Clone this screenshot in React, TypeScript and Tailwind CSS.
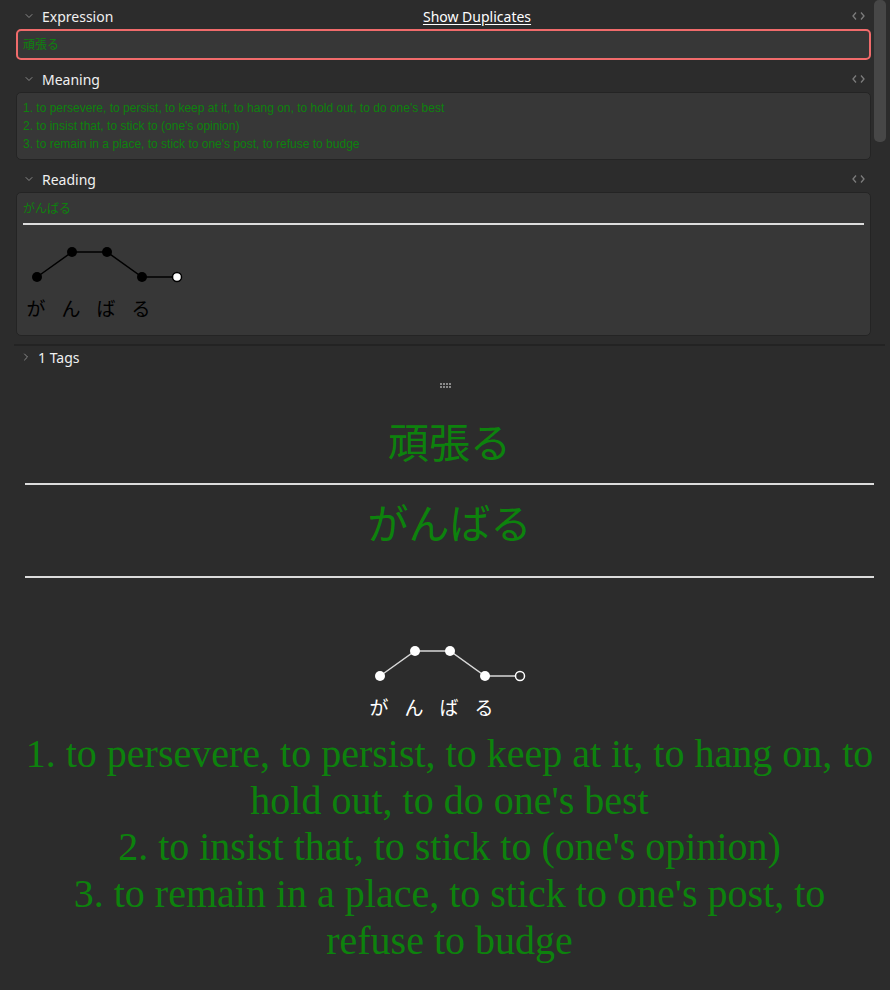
import { ChevronDown, ChevronRight } from 'lucide-react'

const MEANINGS = [
  "1. to persevere, to persist, to keep at it, to hang on, to hold out, to do one's best",
  "2. to insist that, to stick to (one's opinion)",
  "3. to remain in a place, to stick to one's post, to refuse to budge",
]

const KANA = ['が', 'ん', 'ば', 'る']

function CodeIcon() {
  return (
    <svg width="13" height="10" viewBox="0 0 13 10" fill="none" stroke="#7c7c7c" strokeWidth={1.3}>
      <path d="M4 1.5L1 5l3 3.5M9 1.5L12 5 9 8.5" />
    </svg>
  )
}

function FieldLabel({ name, extra }: { name: string; extra?: React.ReactNode }) {
  return (
    <div className="relative flex items-center h-[26px] pl-[7px] pr-[6px]">
      <ChevronDown className="w-3 h-3 text-[#8a8a8a]" strokeWidth={2} />
      <span className="ml-[7px] text-[14px] text-[#f0f0f0]">{name}</span>
      {extra}
      <div className="ml-auto">
        <CodeIcon />
      </div>
    </div>
  )
}

function Pitch({ x0, line, dot, open, textColor }: { x0: number; line: string; dot: string; open: string; textColor: string }) {
  const xs = [0, 35, 70, 105, 140].map((v) => v + x0)
  const ys = [48, 23, 23, 48, 48]
  return (
    <svg width={x0 * 2 + 140} height="100" viewBox={`0 0 ${x0 * 2 + 140} 100`}>
      <polyline points={xs.map((x, i) => `${x},${ys[i]}`).join(' ')} fill="none" stroke={line} strokeWidth={1.5} />
      {xs.slice(0, 4).map((x, i) => (
        <circle key={i} cx={x} cy={ys[i]} r={5} fill={dot} />
      ))}
      <circle cx={xs[4]} cy={ys[4]} r={4.5} fill={open} stroke={dot} strokeWidth={1.5} />
      {KANA.map((k, i) => (
        <text key={k} x={xs[i] - 1} y={87} textAnchor="middle" fontSize="19" fill={textColor} fontFamily="'Noto Sans CJK JP', sans-serif">
          {k}
        </text>
      ))}
    </svg>
  )
}

export default function App() {
  return (
    <div className="w-[890px] h-[990px] bg-[#2c2c2c] overflow-hidden relative" style={{ fontFamily: "'Noto Sans', 'Noto Sans CJK JP', sans-serif" }}>
      {/* scrollbar */}
      <div className="absolute right-[4px] top-0 w-[12px] h-[142px] rounded-[5px] bg-[#474747]" />

      {/* Editor fields */}
      <div className="mr-[5px] ml-[14px] border-b-2 border-[#232323] pb-[8px] pt-[3px]">
        <div className="ml-[2px] mr-[14px]">
          <FieldLabel
            name="Expression"
            extra={
              <span className="absolute left-[461px] -translate-x-1/2 text-[14px] text-white underline underline-offset-2">Show Duplicates</span>
            }
          />
          <div className="h-[31px] rounded-[5px] border-2 border-[#f06b6b] bg-[#373737] px-[5px] flex items-center">
            <span className="text-[12px] text-[#0d820d]" style={{ fontFamily: "'Liberation Sans', 'Noto Sans CJK JP', sans-serif" }}>頑張る</span>
          </div>

          <div className="mt-[6px]">
            <FieldLabel name="Meaning" />
            <div className="rounded-[5px] border border-[#242424] bg-[#373737] px-[6px] pt-[6px] pb-[6px]">
              {MEANINGS.map((m) => (
                <div key={m} className="text-[12px] leading-[18px] text-[#0d820d]" style={{ fontFamily: "'Liberation Sans', sans-serif" }}>
                  {m}
                </div>
              ))}
            </div>
          </div>

          <div className="mt-[6px]">
            <FieldLabel name="Reading" />
            <div className="rounded-[5px] border border-[#242424] bg-[#373737] px-[6px] pt-[6px] pb-[6px]">
              <div className="text-[12px] leading-[18px] text-[#0d820d]" style={{ fontFamily: "'Noto Sans CJK JP', sans-serif" }}>がんばる</div>
              <div className="mt-[6px] h-[2px] bg-[#dcdcdc]" />
              <div className="mt-[4px]">
                <Pitch x0={14} line="#000" dot="#000" open="#fff" textColor="#000" />
              </div>
            </div>
          </div>
        </div>
      </div>

      {/* Tags */}
      <div className="flex items-center h-[22px] pl-[20px]">
        <ChevronRight className="w-3 h-3 text-[#8a8a8a]" strokeWidth={2} />
        <span className="ml-[6px] text-[14px] text-[#f0f0f0]">1 Tags</span>
      </div>

      {/* drag handle */}
      <div className="flex justify-center mt-[15px]">
        <div className="grid grid-cols-4 gap-[1px]">
          {[0, 1, 2, 3, 4, 5, 6, 7].map((i) => (
            <div key={i} className="w-[2px] h-[2px] bg-[#8a8a8a]" />
          ))}
        </div>
      </div>

      {/* Preview */}
      <div className="ml-[25px] mr-[16px] flex flex-col items-center mt-[23px]">
        <div className="text-[41px] leading-[58px] text-[#0d820d]" style={{ fontFamily: "'Noto Sans CJK JP', sans-serif" }}>頑張る</div>
        <div className="self-stretch mt-[14px] h-[2px] bg-[#dcdcdc]" />
        <div className="mt-[7px] text-[41px] leading-[58px] text-[#0d820d]" style={{ fontFamily: "'Noto Sans CJK JP', sans-serif" }}>がんばる</div>
        <div className="self-stretch mt-[26px] h-[2px] bg-[#dcdcdc]" />
        <div className="mt-[50px] ml-[1px]">
          <Pitch x0={20} line="#d8d8d8" dot="#fff" open="#2c2c2c" textColor="#fff" />
        </div>
        <div className="mt-[3px] text-center text-[40px] leading-[46.7px] text-[#0d820d]" style={{ fontFamily: "'Liberation Serif', serif" }}>
          {MEANINGS.map((m) => (
            <div key={m}>{m}</div>
          ))}
        </div>
      </div>
    </div>
  )
}
